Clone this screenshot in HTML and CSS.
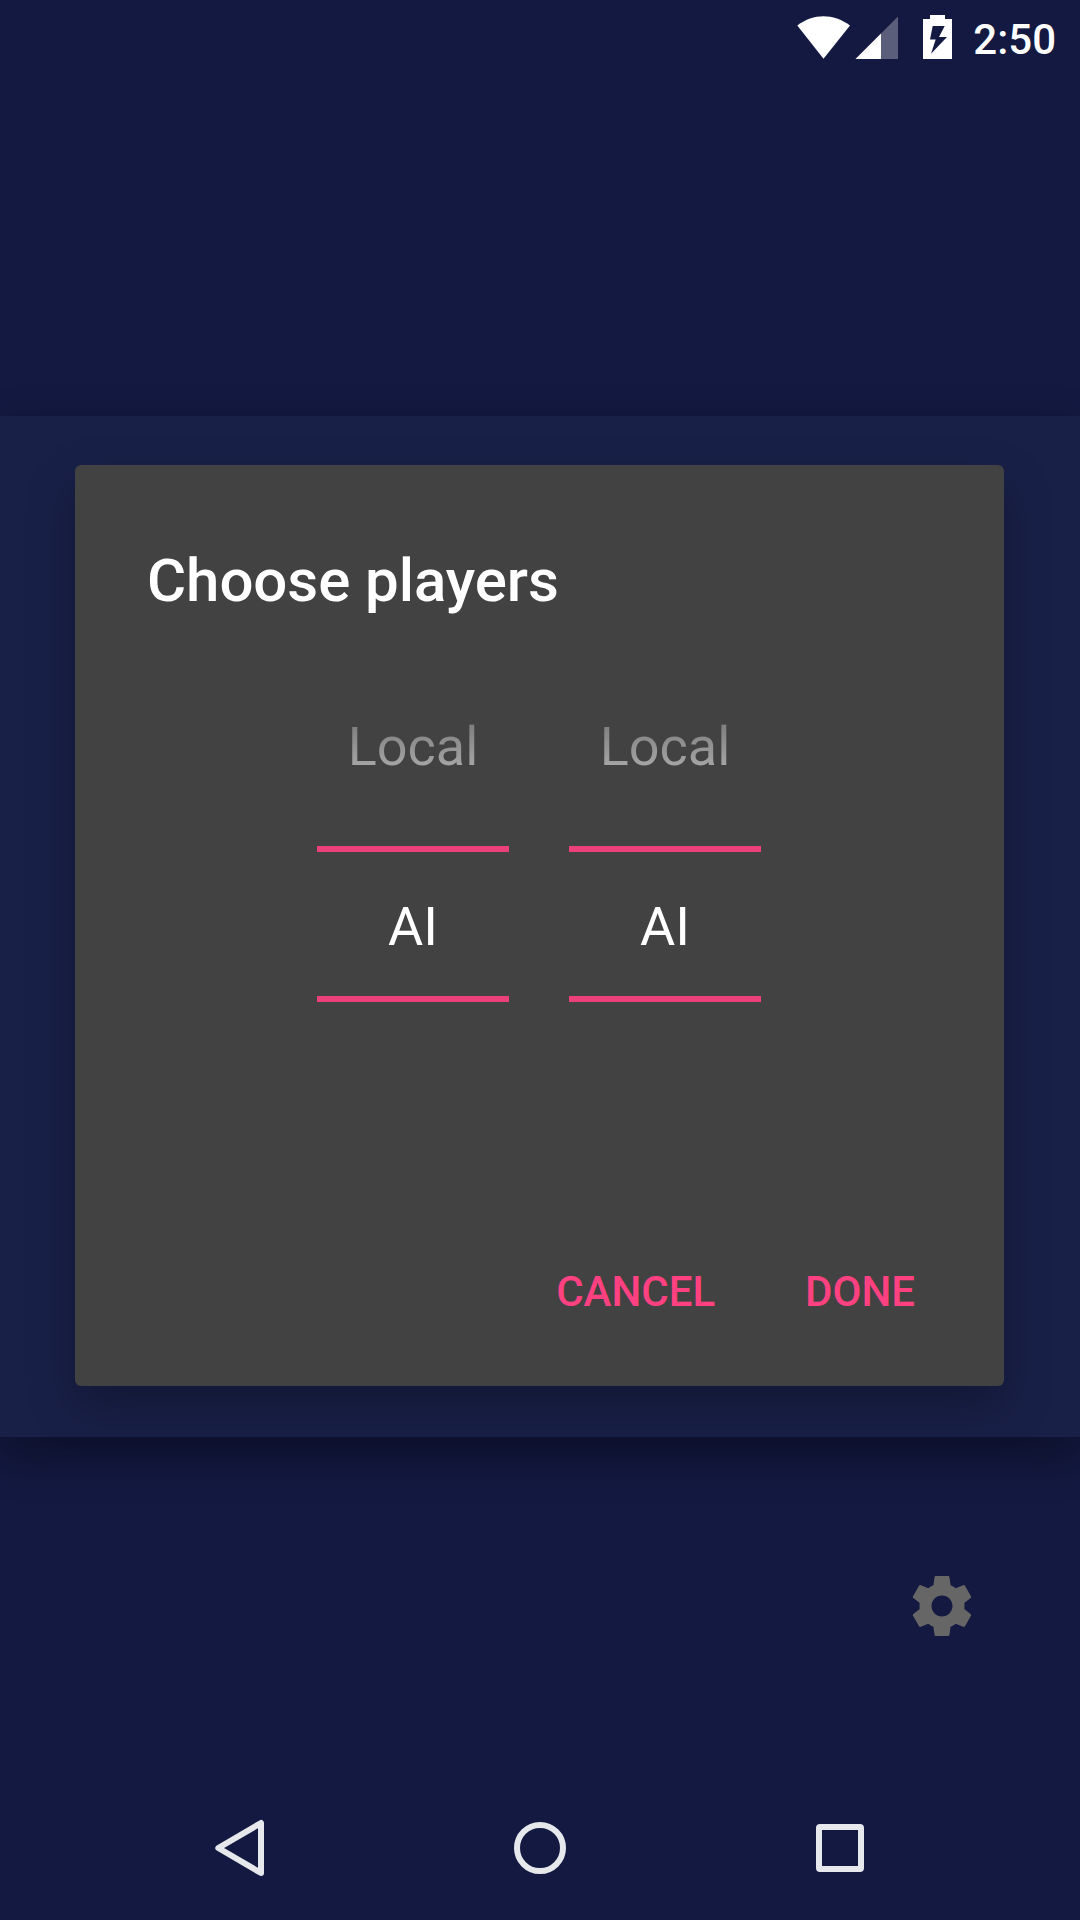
FILE: index.html
```html
<!DOCTYPE html>
<html lang="en">
<head>
<meta charset="utf-8">
<title>Choose players</title>
<link rel="stylesheet" href="styles.css">
</head>
<body>
<div class="screen">
  <header class="status-bar">
    <svg class="wifi" width="54" height="44" viewBox="0 0 54 44"><path d="M0.3 10.6C8.500 4.300 17.500 1.300 26.500 1.300s18 3 26.500 9.300L26.500 43.700z" fill="#fff"/></svg>
    <svg class="signal" width="44" height="44" viewBox="0 0 44 44"><path d="M43 1.500V44H.5z" fill="#5b5e7b"/><path d="M26 18.500V44H.5z" fill="#fff"/></svg>
    <svg class="battery" width="30" height="44" viewBox="0 0 30 44"><path fill="#fff" fill-rule="evenodd" d="M7 0h15v4h7v40H0V4h7zM9.700 11 7 24.400h5.700L8 38.700l16-16.700h-8L21.700 11z"/></svg>
    <time class="clock">2:50</time>
  </header>
  <main class="band">
    <section class="dialog" role="dialog">
      <h1 class="title">Choose players</h1>
      <div class="pickers">
        <div class="picker">
          <div class="option previous">Local</div>
          <div class="option selected">AI</div>
        </div>
        <div class="picker">
          <div class="option previous">Local</div>
          <div class="option selected">AI</div>
        </div>
      </div>
      <div class="actions">
        <button class="action">CANCEL</button>
        <button class="action">DONE</button>
      </div>
    </section>
  </main>
  <div class="settings">
    <svg width="72" height="72" viewBox="0 0 24 24"><path fill="#666" d="M19.43 12.98c.04-.32.07-.64.07-.98s-.03-.66-.07-.98l2.11-1.65c.19-.15.24-.42.12-.64l-2-3.46c-.12-.22-.39-.3-.61-.22l-2.49 1c-.52-.4-1.08-.73-1.69-.98l-.38-2.65C14.46 2.18 14.25 2 14 2h-4c-.25 0-.46.18-.49.42l-.38 2.65c-.61.25-1.17.59-1.69.98l-2.49-1c-.23-.09-.49 0-.61.22l-2 3.46c-.13.22-.07.49.12.64l2.11 1.65c-.04.32-.07.65-.07.98s.03.66.07.98l-2.11 1.65c-.19.15-.24.42-.12.64l2 3.46c.12.22.39.3.61.22l2.49-1c.52.4 1.08.73 1.69.98l.38 2.65c.03.24.24.42.49.42h4c.25 0 .46-.18.49-.42l.38-2.65c.61-.25 1.17-.59 1.69-.98l2.49 1c.23.09.49 0 .61-.22l2-3.46c.12-.22.07-.49-.12-.64zM12 15.500c-1.930 0-3.500-1.570-3.500-3.500s1.570-3.500 3.500-3.500 3.500 1.570 3.500 3.500-1.570 3.500-3.500 3.500z"/></svg>
  </div>
  <nav class="nav-bar">
    <svg width="80" height="90" viewBox="0 0 80 90"><path d="M18.300 48 61 23v50z" fill="none" stroke="#e7e8ec" stroke-width="6" stroke-linejoin="round"/></svg>
    <svg width="80" height="90" viewBox="0 0 80 90"><circle cx="40" cy="48" r="23" fill="none" stroke="#e7e8ec" stroke-width="6"/></svg>
    <svg width="80" height="90" viewBox="0 0 80 90"><rect x="19" y="27" width="42" height="42" rx="1" fill="none" stroke="#e7e8ec" stroke-width="6"/></svg>
  </nav>
</div>
</body>
</html>
```
FILE: styles.css
```css
* { box-sizing: border-box; }

body {
  margin: 0;
  background: #131940;
  font-family: Roboto, "Liberation Sans", sans-serif;
}

.screen {
  width: 1080px;
  height: 1920px;
  display: flex;
  flex-direction: column;
  overflow: hidden;
}

svg { display: block; flex: none; }

.status-bar {
  height: 416px;
  padding: 15px 24px 0 0;
  display: flex;
  justify-content: flex-end;
  align-items: flex-start;
}

.signal { margin-left: 4px; }
.battery { margin-left: 24px; }

.clock {
  margin-left: 20px;
  margin-top: 1px;
  font-size: 42px;
  line-height: 48px;
  font-weight: 500;
  color: #fff;
}

.band {
  height: 1021px;
  flex: none;
  padding: 49px 76px 0 75px;
  background: #192048;
  box-shadow: 0 18px 40px rgba(0, 0, 0, 0.34);
}

.dialog {
  height: 921px;
  padding: 77px 73px 0 72px;
  display: flex;
  flex-direction: column;
  background: #424242;
  border-radius: 6px;
  box-shadow: 0 20px 48px rgba(0, 0, 0, 0.28);
}

.title {
  margin: 0;
  color: #fff;
  font-size: 60px;
  line-height: 78px;
  font-weight: 500;
  letter-spacing: -0.06px;
}

.pickers {
  height: 618px;
  padding-top: 31px;
  display: flex;
  justify-content: center;
  gap: 60px;
}

.picker { width: 192px; }

.option {
  font-size: 54px;
  text-align: center;
}

.previous {
  height: 195px;
  padding-top: 58px;
  line-height: 76px;
  color: transparent;
  background: linear-gradient(#7d7d7d 72px, #a4a4a4 114px);
  -webkit-background-clip: text;
  background-clip: text;
}

.selected {
  height: 156px;
  border: solid #ec407a;
  border-width: 6px 0;
  line-height: 150px;
  color: #fff;
}

.actions {
  margin-right: 16px;
  display: flex;
  justify-content: flex-end;
}

.action {
  height: 108px;
  padding: 0;
  border: 0;
  background: none;
  color: #ff4081;
  font: 500 42px/108px Roboto, "Liberation Sans", sans-serif;
}

.action + .action { margin-left: 90px; }

.settings {
  padding: 133px 102px 0 0;
  display: flex;
  justify-content: flex-end;
}

.nav-bar {
  margin-top: auto;
  padding: 0 200px 30px;
  display: flex;
  justify-content: space-between;
}
```
